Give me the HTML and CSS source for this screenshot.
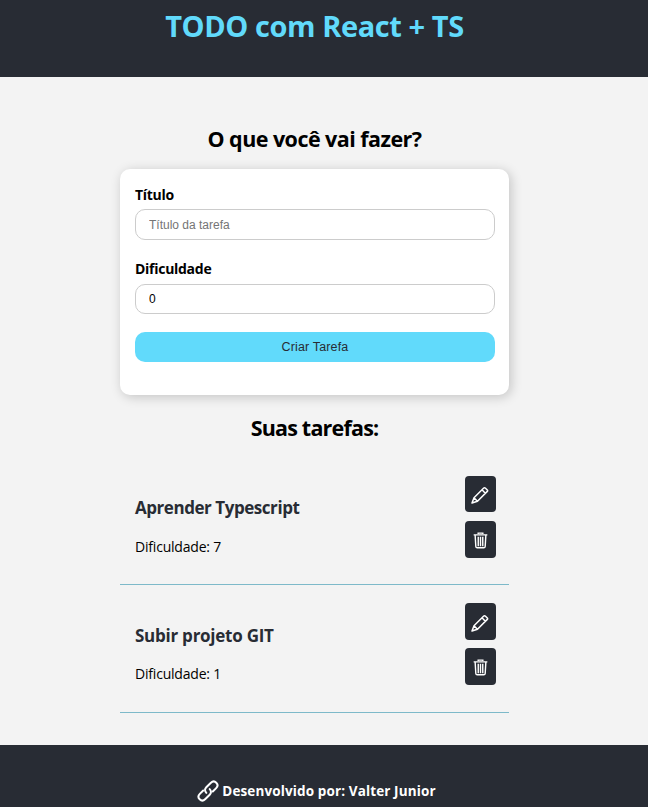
FILE: index.html
```html
<!DOCTYPE html>
<html lang="pt-BR">
<head>
<meta charset="utf-8">
<title>TODO com React + TS</title>
<link rel="stylesheet" href="styles.css">
</head>
<body>
<svg class="sprite" aria-hidden="true">
  <symbol id="pencil" viewBox="0 0 18 18"><path d="M1 17 3 11.700 12.500 2.200Q13.500 1.200 14.500 2.200L16.300 4Q17 4.700 16.300 5.400L6.500 15.200ZM3 11.700 6.400 15.200M11 3.800 14.300 7.200" fill="none" stroke="currentColor" stroke-width="1.500" stroke-linejoin="round"/></symbol>
  <symbol id="trash" viewBox="0 0 16 18"><path d="M5.500 2V1.100H10.500V2M.7 3H15.300M2.300 3.500 3 15.400Q3.100 16.800 4.500 16.800H11.500Q12.900 16.800 13 15.400L13.700 3.500M5.600 5V15M8 5V15M10.400 5V15" fill="none" stroke="currentColor" stroke-width="1.500"/></symbol>
  <symbol id="link" viewBox="0 0 22 22"><g fill="none" stroke="currentColor" stroke-width="2" stroke-linecap="round"><path d="M9.300 12.900C7.600 11.200 7.600 9 9.300 7.300L13.900 2.800C15.500 1.200 17.800 1.200 19.300 2.700S20.800 6.500 19.200 8.100L15.800 11.500"/><path d="M12.700 9.100C14.400 10.800 14.400 13 12.700 14.700L8.100 19.200C6.500 20.800 4.200 20.800 2.700 19.300S1.200 15.500 2.800 13.900L6.200 10.500"/></g></symbol>
</svg>
<header class="header"><h1>TODO com React + TS</h1></header>
<main class="main">
  <section>
    <h2 class="ask">O que você vai fazer?</h2>
    <form class="form">
      <label class="title-label" for="title">Título</label>
      <input class="title-input" id="title" type="text" placeholder="Título da tarefa">
      <label for="level">Dificuldade</label>
      <input id="level" type="text" value="0">
      <button class="submit" type="button">Criar Tarefa</button>
    </form>
  </section>
  <section>
    <h2 class="list-title">Suas tarefas:</h2>
    <article class="task">
      <div class="details"><h3 class="first-name">Aprender Typescript</h3><p>Dificuldade: 7</p></div>
      <div class="actions">
        <button type="button" aria-label="Editar"><svg class="pencil"><use href="#pencil"/></svg></button>
        <button type="button" aria-label="Excluir"><svg class="trash"><use href="#trash"/></svg></button>
      </div>
    </article>
    <article class="task">
      <div class="details"><h3>Subir projeto GIT</h3><p>Dificuldade: 1</p></div>
      <div class="actions">
        <button type="button" aria-label="Editar"><svg class="pencil"><use href="#pencil"/></svg></button>
        <button type="button" aria-label="Excluir"><svg class="trash"><use href="#trash"/></svg></button>
      </div>
    </article>
  </section>
</main>
<footer class="footer"><svg class="link"><use href="#link"/></svg><span>Desenvolvido por: Valter Junior</span></footer>
</body>
</html>
```
FILE: styles.css
```css
* { box-sizing: border-box; margin: 0; padding: 0; }
body { background: #f3f3f3; color: #000; font-family: "Open Sans", "Noto Sans", sans-serif; overflow: hidden; }
.sprite { display: none; }
.header { height: 77px; padding: 6px 19px 0 0; background: #282c34; color: #61dafb; text-align: center; }
h1 { font-size: 29px; line-height: 40px; font-weight: 700; letter-spacing: -.42px; }
.main { width: 389px; height: 668px; margin-left: 120px; padding-top: 47px; }
h2 { font-size: 21.5px; line-height: 30px; font-weight: 700; letter-spacing: -.55px; text-align: center; white-space: nowrap; }
.form { height: 226px; margin-top: 15px; padding: 15px 14px 0 15px; background: #fff; border-radius: 10px; box-shadow: 2px 2px 12px rgba(0, 0, 0, .2); }
label { display: block; font-size: 14px; line-height: 20px; font-weight: 700; letter-spacing: -.28px; margin-bottom: 5px; }
.title-label { padding-top: 1px; margin-bottom: 4px; }
input { display: block; width: 360px; height: 30px; padding: 0 13px; border: 1px solid #ccc; border-radius: 10px; background: #fff; font: 12px "Liberation Sans", sans-serif; color: #000; }
.title-input { height: 31px; margin-bottom: 19px; }
input::placeholder { color: #757575; opacity: 1; }
.submit { display: block; width: 360px; height: 30px; margin-top: 18px; border: 0; border-radius: 10px; background: #61dafb; color: #282c34; font: 12.5px "Liberation Sans", sans-serif; letter-spacing: .15px; }
.list-title { margin: 18px 0 14px; letter-spacing: -.8px; }
.task { display: flex; justify-content: space-between; height: 128px; padding: 18px 13px 0 15px; border-bottom: 1px solid #7db9c9; }
.details { padding-top: 21px; }
h3 { font-size: 17px; line-height: 24px; font-weight: 700; letter-spacing: -.25px; color: #282c34; margin-bottom: 16px; }
.first-name { letter-spacing: -.45px; margin-bottom: 17px; }
p { font-size: 14px; line-height: 20px; letter-spacing: -.2px; }
.actions { display: flex; flex-direction: column; gap: 8px; }
.actions button { display: flex; align-items: center; justify-content: center; width: 31px; height: 37px; border: 0; border-radius: 4px; background: #282c34; color: #fff; }
.task:first-of-type .actions { padding-top: 1px; gap: 9px; }
.task:first-of-type .actions button:first-child { height: 36px; }
.pencil { width: 18px; height: 18px; margin: 2px 1px 0 0; }
.trash { width: 15px; height: 17px; margin: 2px 1px 0 0; }
.footer { display: flex; justify-content: center; height: 62px; padding: 35px 15px 0 0; background: #282c34; color: #fff; font-size: 13.5px; line-height: 23px; font-weight: 700; letter-spacing: .12px; }
.link { width: 22px; height: 22px; margin-right: 3px; }
```
